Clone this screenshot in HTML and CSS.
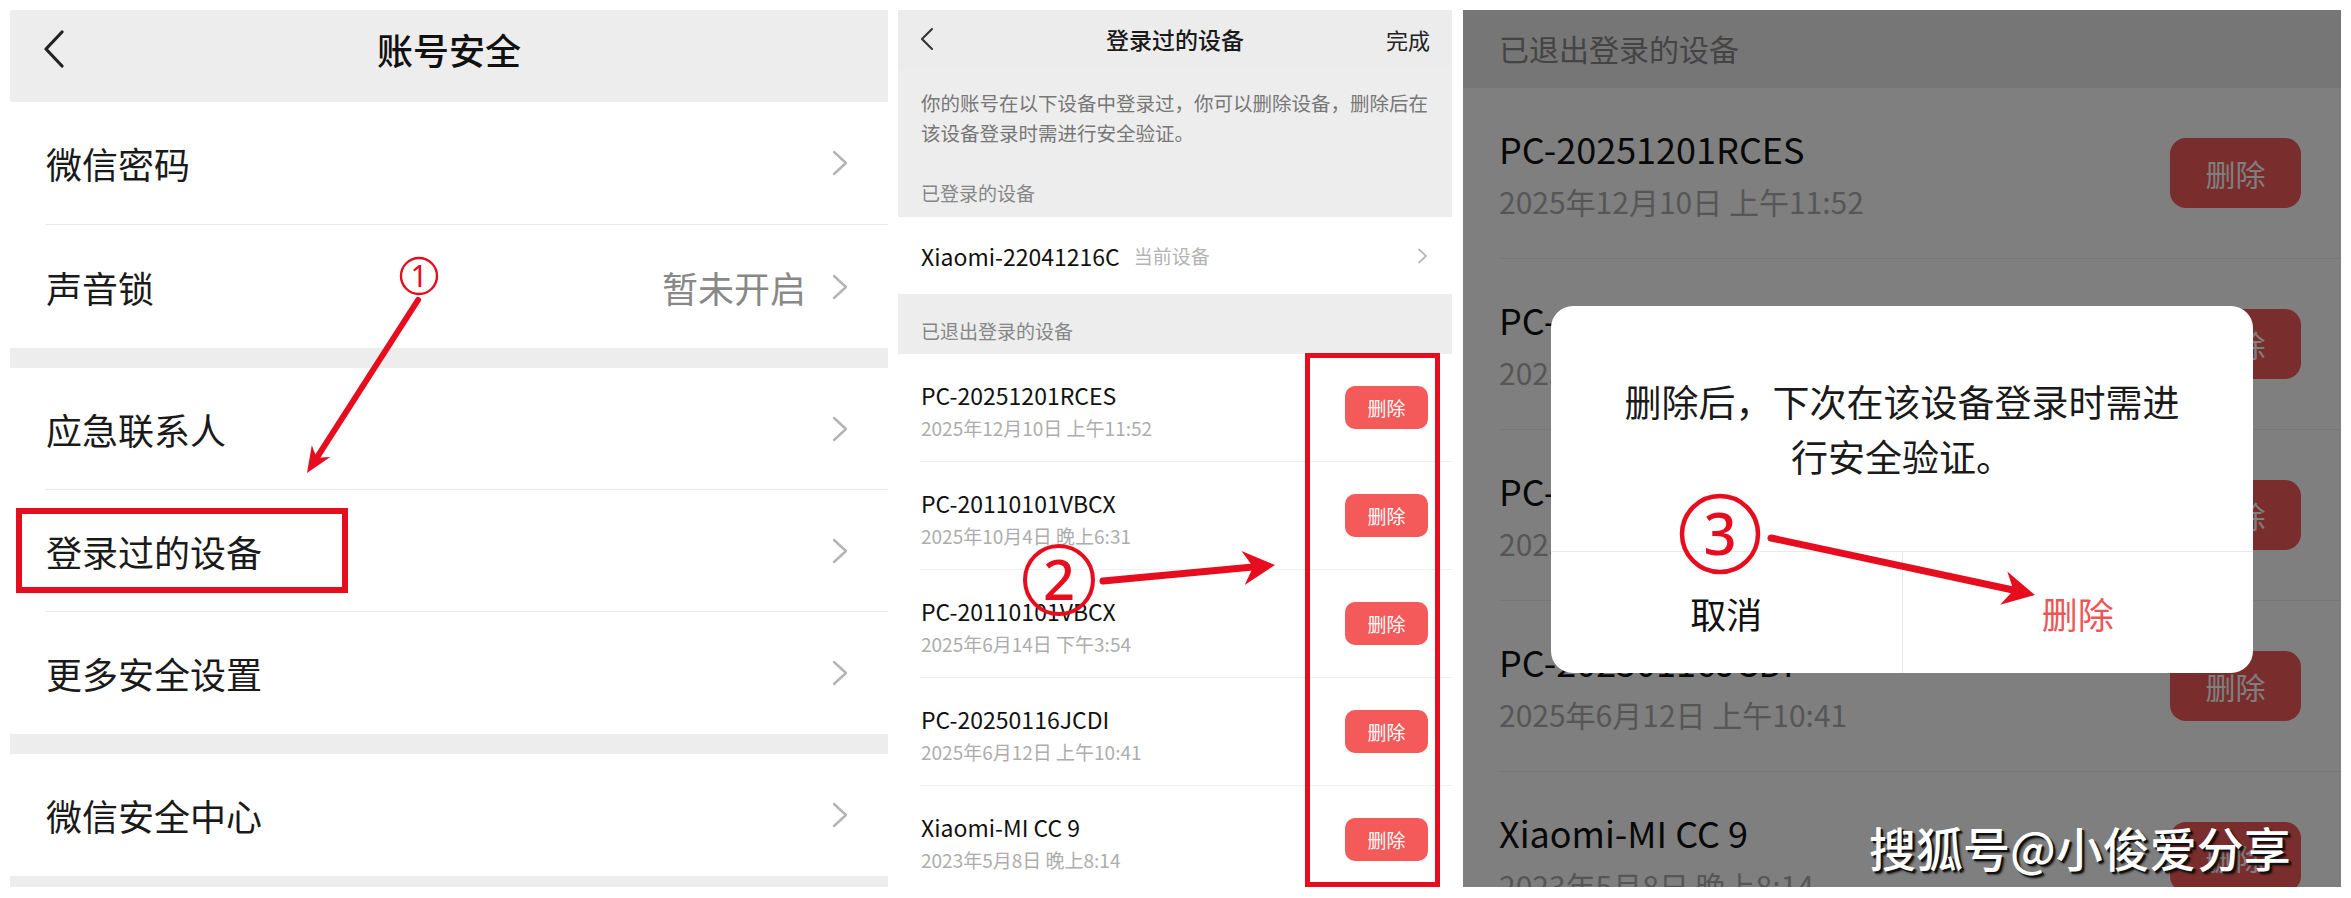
FILE: index.html
```html
<!DOCTYPE html>
<html lang="zh-CN">
<head>
<meta charset="utf-8">
<title>账号安全 - 登录过的设备</title>
<link rel="stylesheet" href="styles.css">
</head>
<body>
<div class="stage">

  <!-- Panel 1 -->
  <section class="panel p1">
    <header class="nav1">
      <svg class="back1" viewBox="0 0 22 38" width="22" height="38"><path d="M19 2 L3 19 L19 36" fill="none" stroke="#222" stroke-width="3.2" stroke-linecap="round" stroke-linejoin="round"/></svg>
      <h1>账号安全</h1>
      <span></span>
    </header>
    <div class="group g1">
      <div class="row"><div class="row-in"><span class="label">微信密码</span><svg class="chev" viewBox="0 0 16 26"><path d="M2 2 L14 13 L2 24" fill="none" stroke="#b4b4b4" stroke-width="2.4" stroke-linecap="round" stroke-linejoin="round"/></svg></div></div>
      <div class="row"><div class="row-in"><span class="label">声音锁</span><span class="value">暂未开启</span><svg class="chev" viewBox="0 0 16 26"><path d="M2 2 L14 13 L2 24" fill="none" stroke="#b4b4b4" stroke-width="2.4" stroke-linecap="round" stroke-linejoin="round"/></svg></div></div>
    </div>
    <div class="group">
      <div class="row"><div class="row-in"><span class="label">应急联系人</span><svg class="chev" viewBox="0 0 16 26"><path d="M2 2 L14 13 L2 24" fill="none" stroke="#b4b4b4" stroke-width="2.4" stroke-linecap="round" stroke-linejoin="round"/></svg></div></div>
      <div class="row"><div class="row-in"><span class="label">登录过的设备</span><svg class="chev" viewBox="0 0 16 26"><path d="M2 2 L14 13 L2 24" fill="none" stroke="#b4b4b4" stroke-width="2.4" stroke-linecap="round" stroke-linejoin="round"/></svg></div></div>
      <div class="row"><div class="row-in"><span class="label">更多安全设置</span><svg class="chev" viewBox="0 0 16 26"><path d="M2 2 L14 13 L2 24" fill="none" stroke="#b4b4b4" stroke-width="2.4" stroke-linecap="round" stroke-linejoin="round"/></svg></div></div>
    </div>
    <div class="group">
      <div class="row"><div class="row-in"><span class="label">微信安全中心</span><svg class="chev" viewBox="0 0 16 26"><path d="M2 2 L14 13 L2 24" fill="none" stroke="#b4b4b4" stroke-width="2.4" stroke-linecap="round" stroke-linejoin="round"/></svg></div></div>
    </div>

    <div class="mark-box mb1"></div>
    <svg class="annot" viewBox="0 0 878 877" width="878" height="877">
      <circle cx="409" cy="266" r="18" fill="none" stroke="#e60d1e" stroke-width="2.4"/>
      <text x="409" y="277" text-anchor="middle" class="num1">1</text>
      <line x1="408" y1="290" x2="306.7" y2="447.8" stroke="#e60d1e" stroke-width="6" stroke-linecap="round"/>
      <polygon points="297,463 320.3,447 306.7,447.8 301.8,435.2" fill="#e60d1e"/>
    </svg>
  </section>

  <!-- Panel 2 -->
  <section class="panel p2">
    <header class="nav2">
      <svg class="back2" viewBox="0 0 14 24" width="14" height="24"><path d="M12 2 L2 12 L12 22" fill="none" stroke="#333" stroke-width="2.1" stroke-linecap="round" stroke-linejoin="round"/></svg>
      <span class="title">登录过的设备</span>
      <span class="done">完成</span>
    </header>
    <p class="intro">你的账号在以下设备中登录过，你可以删除设备，删除后在该设备登录时需进行安全验证。</p>
    <div class="sec">已登录的设备</div>
    <div class="cur">
      <span class="name">Xiaomi-22041216C</span>
      <span class="tag">当前设备</span>
      <svg class="chev2" viewBox="0 0 11 16" width="11" height="16"><path d="M2 1.5 L9 8 L2 14.5" fill="none" stroke="#b8b8b8" stroke-width="1.8" stroke-linecap="round" stroke-linejoin="round"/></svg>
    </div>
    <div class="sec sec2">已退出登录的设备</div>
    <div class="list">
      <div class="dev"><div class="dev-in"><div class="dev-text"><div class="name">PC-20251201RCES</div><div class="date">2025年12月10日 上午11:52</div></div><span class="btn">删除</span></div></div>
      <div class="dev"><div class="dev-in"><div class="dev-text"><div class="name">PC-20110101VBCX</div><div class="date">2025年10月4日 晚上6:31</div></div><span class="btn">删除</span></div></div>
      <div class="dev"><div class="dev-in"><div class="dev-text"><div class="name">PC-20110101VBCX</div><div class="date">2025年6月14日 下午3:54</div></div><span class="btn">删除</span></div></div>
      <div class="dev"><div class="dev-in"><div class="dev-text"><div class="name">PC-20250116JCDI</div><div class="date">2025年6月12日 上午10:41</div></div><span class="btn">删除</span></div></div>
      <div class="dev"><div class="dev-in"><div class="dev-text"><div class="name">Xiaomi-MI CC 9</div><div class="date">2023年5月8日 晚上8:14</div></div><span class="btn">删除</span></div></div>
    </div>

    <div class="mark-box mb2"></div>
    <svg class="annot" viewBox="0 0 554 877" width="554" height="877">
      <circle cx="161" cy="570" r="34" fill="none" stroke="#e60d1e" stroke-width="4"/>
      <text x="161" y="590" text-anchor="middle" class="num2">2</text>
      <line x1="205" y1="571" x2="355" y2="557" stroke="#e60d1e" stroke-width="7" stroke-linecap="round"/>
      <polygon points="377,555 343.5,541.1 355.1,557 346.7,574.9" fill="#e60d1e"/>
    </svg>
  </section>

  <!-- Panel 3 -->
  <section class="panel p3">
    <div class="rhead">已退出登录的设备</div>
    <div class="rlist">
      <div class="rdev"><div class="rdev-in"><div class="rdev-text"><div class="name">PC-20251201RCES</div><div class="date">2025年12月10日 上午11:52</div></div><span class="rbtn">删除</span></div></div>
      <div class="rdev"><div class="rdev-in"><div class="rdev-text"><div class="name">PC-20110101VBCX</div><div class="date">2025年10月4日 晚上6:31</div></div><span class="rbtn">删除</span></div></div>
      <div class="rdev"><div class="rdev-in"><div class="rdev-text"><div class="name">PC-20110101VBCX</div><div class="date">2025年6月14日 下午3:54</div></div><span class="rbtn">删除</span></div></div>
      <div class="rdev"><div class="rdev-in"><div class="rdev-text"><div class="name">PC-20250116JCDI</div><div class="date">2025年6月12日 上午10:41</div></div><span class="rbtn">删除</span></div></div>
      <div class="rdev"><div class="rdev-in"><div class="rdev-text"><div class="name">Xiaomi-MI CC 9</div><div class="date">2023年5月8日 晚上8:14</div></div><span class="rbtn">删除</span></div></div>
    </div>
    <div class="mask">
      <div class="dialog">
        <div class="dlg-msg">删除后，下次在该设备登录时需进行安全验证。</div>
        <div class="dlg-btns"><span class="cancel">取消</span><span class="ok">删除</span></div>
      </div>
    </div>
    <svg class="annot" viewBox="0 0 878 877" width="878" height="877">
      <circle cx="257" cy="524" r="38" fill="none" stroke="#e60d1e" stroke-width="4.5"/>
      <text x="257" y="545" text-anchor="middle" class="num3">3</text>
      <line x1="308" y1="528" x2="550" y2="580" stroke="#e60d1e" stroke-width="7" stroke-linecap="round"/>
      <polygon points="572,585 544.3,561.6 550.5,580.3 537.1,594.8" fill="#e60d1e"/>
    </svg>
    <div class="wm">搜狐号@小俊爱分享</div>
  </section>

</div>
</body>
</html>
```

FILE: styles.css
```css
* { box-sizing: border-box; }

body {
  margin: 0;
  background: #fff;
  font-family: "Noto Sans CJK SC", "Noto Sans", sans-serif;
}

.stage {
  display: flex;
  gap: 10px;
  padding: 10px 10px 0;
  width: 2351px;
  height: 898px;
}

.panel {
  position: relative;
  flex: none;
  height: 877px;
  overflow: hidden;
  background: #ededed;
}
.p1 { width: 878px; }
.p2 { width: 554px; }
.p3 { width: 878px; margin-left: 1px; }

/* ---------- panel 1 ---------- */
.nav1 {
  height: 92px;
  display: grid;
  grid-template-columns: 1fr auto 1fr;
  align-items: center;
  padding: 0 33px 14px;
}
.nav1 h1 {
  margin: 0;
  font-size: 36px;
  line-height: 1;
  font-weight: 500;
  color: #111;
}
.back1 { display: block; }

.group {
  background: #fff;
  margin-bottom: 20px;
}
.row {
  display: flex;
  height: 122px;
  padding-left: 36px;
}
.g1 .row { height: 123px; }
.row-in {
  flex: 1;
  display: flex;
  align-items: center;
  padding-right: 40px;
  border-bottom: 1px solid #e7e7e7;
}
.row:last-child .row-in { border-bottom: none; }
.label {
  flex: 1;
  font-size: 36px;
  color: #1a1a1a;
}
.value {
  font-size: 36px;
  color: #888;
  margin-right: 26px;
}
.chev { width: 16px; height: 26px; display: block; }

.mark-box {
  position: absolute;
  border: 6px solid #e60d1e;
}
.mb1 { left: 6px; top: 498px; width: 332px; height: 85px; }
.mb2 { left: 407px; top: 343px; width: 135px; height: 534px; border-width: 5px; }

.annot {
  position: absolute;
  left: 0;
  top: 0;
  pointer-events: none;
}
.num1 { font-size: 30px; fill: #e60d1e; font-family: "Noto Sans", sans-serif; }
.num2 { font-size: 56px; fill: #e60d1e; font-weight: 500; font-family: "Noto Sans", sans-serif; }
.num3 { font-size: 58px; fill: #e60d1e; font-weight: 500; font-family: "Noto Sans", sans-serif; }

/* ---------- panel 2 ---------- */
.nav2 {
  height: 58px;
  display: grid;
  grid-template-columns: 1fr auto 1fr;
  align-items: center;
  padding: 0 22px;
  background: #ececec;
}
.back2 { display: block; }
.nav2 .title {
  font-size: 23px;
  font-weight: 500;
  color: #1a1a1a;
}
.nav2 .done {
  justify-self: end;
  font-size: 22px;
  color: #222;
}
.intro {
  margin: 20px 0 0;
  padding: 0 20px 0 23px;
  font-size: 19.5px;
  line-height: 30px;
  color: #777;
}
.sec {
  height: 69px;
  padding: 30px 23px 0;
  font-size: 19px;
  line-height: 30px;
  color: #868686;
}
.sec2 {
  height: 60px;
  padding-top: 22px;
}
.cur {
  height: 77px;
  display: flex;
  align-items: center;
  padding: 0 24px 0 23px;
  background: #fff;
}
.cur .name { font-size: 23px; color: #111; }
.cur .tag {
  flex: 1;
  margin-left: 14px;
  font-size: 19px;
  color: #b3b3b3;
}
.chev2 { display: block; }

.list { background: #fff; }
.dev {
  display: flex;
  height: 108px;
  padding-left: 22px;
}
.dev-in {
  flex: 1;
  display: flex;
  align-items: center;
  padding-right: 24px;
  border-bottom: 1px solid #efefef;
}
.dev-text {
  flex: 1;
  align-self: flex-start;
  padding: 26px 0 0 1px;
}
.dev .name {
  font-size: 23px;
  line-height: 30px;
  color: #111;
}
.dev .date {
  margin-top: 5px;
  font-size: 19px;
  line-height: 26px;
  color: #adadad;
}
.btn {
  width: 83px;
  height: 43px;
  border-radius: 10px;
  background: #f45a5a;
  color: #fff;
  font-size: 19px;
  display: flex;
  align-items: center;
  justify-content: center;
}

/* ---------- panel 3 ---------- */
.rhead {
  height: 78px;
  padding: 18px 36px 0;
  font-size: 30px;
  line-height: 40px;
  color: #888;
}
.rlist { background: #fff; }
.rdev {
  display: flex;
  height: 171px;
  padding-left: 36px;
}
.rdev-in {
  flex: 1;
  display: flex;
  align-items: center;
  padding-right: 40px;
  border-bottom: 1px solid #efefef;
}
.rdev-text {
  flex: 1;
  align-self: flex-start;
  padding-top: 38px;
}
.rdev .name {
  font-size: 36px;
  line-height: 44px;
  color: #111;
}
.rdev .date {
  margin-top: 11px;
  font-size: 30px;
  line-height: 40px;
  color: #adadad;
}
.rbtn {
  width: 131px;
  height: 70px;
  border-radius: 16px;
  background: #f45a5a;
  color: #fff;
  font-size: 30px;
  display: flex;
  align-items: center;
  justify-content: center;
}

.mask {
  position: absolute;
  inset: 0;
  background: rgba(0, 0, 0, 0.5);
  display: flex;
  justify-content: center;
  align-items: flex-start;
  padding-top: 296px;
}
.dialog {
  width: 702px;
  height: 367px;
  background: #fff;
  border-radius: 22px;
  display: flex;
  flex-direction: column;
  overflow: hidden;
}
.dlg-msg {
  height: 245px;
  padding: 68px 66px 0;
  font-size: 37px;
  line-height: 55px;
  color: #1a1a1a;
  text-align: center;
}
.dlg-btns {
  flex: 1;
  display: flex;
  border-top: 1px solid #e8e8e8;
}
.dlg-btns span {
  flex: 1;
  display: flex;
  align-items: center;
  justify-content: center;
  font-size: 36px;
}
.dlg-btns .cancel { color: #111; }
.dlg-btns .ok {
  color: #ec5656;
  border-left: 1px solid #e8e8e8;
}

.wm {
  position: absolute;
  left: 406px;
  top: 809px;
  font-size: 47px;
  line-height: 56px;
  font-weight: 500;
  color: #fff;
  white-space: nowrap;
  text-shadow: 2px 2px 0 #111, 3px 3px 2px rgba(0, 0, 0, 0.6);
}
```
